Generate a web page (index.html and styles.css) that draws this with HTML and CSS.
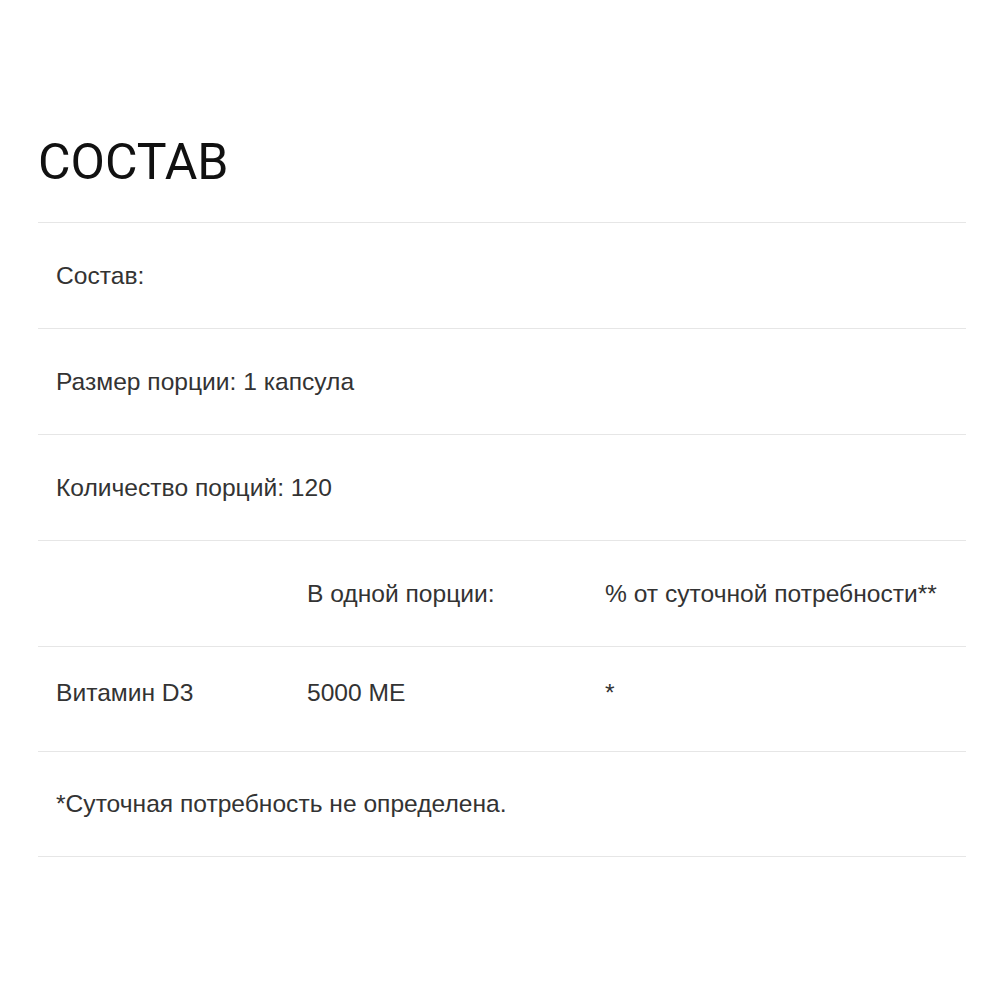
FILE: index.html
```
<!DOCTYPE html>
<html lang="ru">
<head>
<meta charset="utf-8">
<link rel="stylesheet" href="styles.css">
</head>
<body>
<main class="page">
  <h1 class="title">СОСТАВ</h1>
  <table class="facts">
    <colgroup>
      <col class="c1"><col class="c2"><col class="c3">
    </colgroup>
    <tr><td colspan="3">Состав:</td></tr>
    <tr><td colspan="3">Размер порции: 1 капсула</td></tr>
    <tr><td colspan="3">Количество порций: 120</td></tr>
    <tr><td></td><td>В одной порции:</td><td>% от суточной потребности**</td></tr>
    <tr class="short lifted"><td>Витамин D3</td><td>5000 МЕ</td><td>*</td></tr>
    <tr class="short"><td colspan="3">*Суточная потребность не определена.</td></tr>
  </table>
</main>
</body>
</html>
```
FILE: styles.css
```
html, body {
  margin: 0;
  padding: 0;
  background: #fff;
}
.page {
  padding: 137px 34px 0 38px;
}
.title {
  margin: 0 0 35px 0;
  font-family: Roboto, "Liberation Sans", sans-serif;
  font-weight: 400;
  font-size: 50px;
  line-height: 50px;
  color: #111;
}
.facts {
  width: 928px;
  border-collapse: collapse;
  table-layout: fixed;
  font-family: "Liberation Sans", Arial, sans-serif;
  font-size: 24.6px;
  color: #333;
}
.c1 { width: 251px; }
.c2 { width: 298px; }
.c3 { width: 379px; }
.facts tr {
  border-top: 1px solid #e6e6e6;
  border-bottom: 1px solid #e6e6e6;
}
.facts td {
  height: 106px;
  padding: 0 18px;
  vertical-align: middle;
  box-sizing: border-box;
  white-space: nowrap;
}
.facts .short td {
  height: 105px;
}
.facts .lifted td {
  padding-bottom: 12px;
}
```
